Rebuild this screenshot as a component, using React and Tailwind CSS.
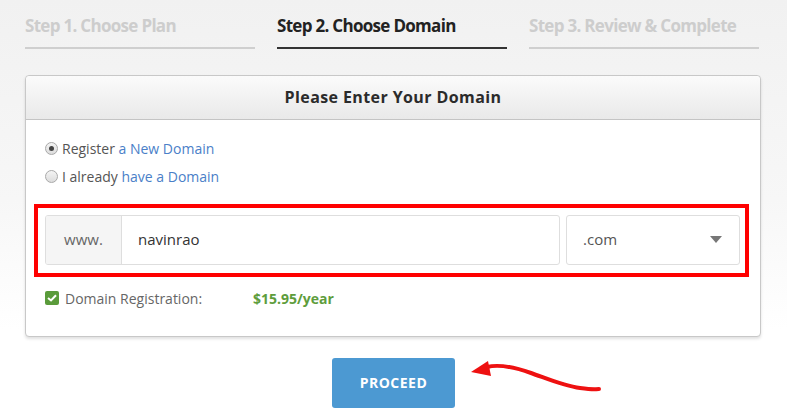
import React from "react";

function Radio({ checked }) {
  return (
    <span className="relative inline-flex h-[13px] w-[13px] shrink-0 items-center justify-center rounded-full border border-[#a9a9a9] bg-[linear-gradient(to_bottom,#f4f4f4,#dcdcdc)]">
      {checked && <span className="h-[5px] w-[5px] rounded-full bg-[#444]" />}
    </span>
  );
}

export default function App() {
  return (
    <div
      className="relative min-h-[417px] w-[787px] bg-[linear-gradient(to_bottom,#f1f1f1,#f7f7f7_200px,#ffffff_330px)] text-[#555]"
      style={{ fontFamily: '"Open Sans", "Liberation Sans", sans-serif' }}
    >
      {/* Steps */}
      <div className="grid grid-cols-3 gap-[22px] pl-[25px] pr-[28px] pt-[13px]">
        <div className="border-b-[2px] border-[#cfcfcf] pb-[8px] text-[17px] font-bold tracking-[-0.7px] text-[#cdcdcd]">
          Step 1. Choose Plan
        </div>
        <div className="border-b-[2px] border-[#333] pb-[8px] text-[17px] font-bold tracking-[-0.7px] text-[#222]">
          Step 2. Choose Domain
        </div>
        <div className="border-b-[2px] border-[#cfcfcf] pb-[8px] text-[17px] font-bold tracking-[-0.7px] text-[#cdcdcd]">
          Step 3. Review &amp; Complete
        </div>
      </div>

      {/* Card */}
      <div className="ml-[25px] mt-[26px] w-[736px] rounded-[4px] border border-[#c8c8c8] bg-white shadow-[0_2px_3px_rgba(0,0,0,0.12)]">
        <div className="flex h-[44px] items-center justify-center rounded-t-[4px] border-b border-[#c4c4c4] bg-[linear-gradient(to_bottom,#fbfbfb,#e9e9e9)] text-[16px] font-bold tracking-[0.4px] text-[#2b2b2b]">
          Please Enter Your Domain
        </div>
        <div className="px-[19px] pt-[19px] pb-[27px]">
          <div className="flex flex-col gap-[9px] text-[14px]">
            <label className="flex h-[19px] items-center gap-[4px]">
              <Radio checked />
              <span>
                Register <span className="text-[#4a80c8]">a New Domain</span>
              </span>
            </label>
            <label className="flex h-[19px] items-center gap-[4px]">
              <Radio />
              <span>
                I already <span className="text-[#4a80c8]">have a Domain</span>
              </span>
            </label>
          </div>

          <div className="-ml-[11px] -mr-[8px] mt-[18px] border-[4px] border-[#ff0000] pt-[7px] pb-[8px] pl-[7px] pr-[5px]">
            <div className="flex h-[50px] gap-[6px]">
              <div className="flex flex-1 overflow-hidden rounded-[3px] border border-[#dedede]">
                <div className="flex w-[76px] items-center justify-center border-r border-[#dedede] bg-[#f5f5f5] text-[15px] text-[#666]">
                  www.
                </div>
                <div className="flex flex-1 items-center pl-[16px] text-[15px] text-[#333]">
                  navinrao
                </div>
              </div>
              <div className="flex w-[174px] items-center justify-between rounded-[3px] border border-[#dedede] pl-[16px] pr-[17px] text-[15px] text-[#555]">
                <span>.com</span>
                <svg width="12" height="7" viewBox="0 0 12 7">
                  <path d="M0 0 L12 0 L6 7 Z" fill="#777" />
                </svg>
              </div>
            </div>
          </div>

          <div className="mt-[11px] flex items-center text-[14px]">
            <span className="flex h-[14px] w-[14px] items-center justify-center rounded-[2px] bg-[#5a9b3a]">
              <svg width="10" height="8" viewBox="0 0 10 8">
                <path d="M1 4 L4 6.5 L9 1.2" fill="none" stroke="#fff" strokeWidth="2" />
              </svg>
            </span>
            <span className="ml-[6px] w-[188px] text-[#666]">Domain Registration:</span>
            <span className="font-bold text-[#5e9d3c]">$15.95/year</span>
          </div>
        </div>
      </div>

      {/* Button */}
      <div className="mt-[21px] flex justify-center">
        <div className="relative">
          <button
            className="flex h-[50px] w-[123px] items-center justify-center rounded-[3px] bg-[#4c99d2] text-[14px] font-bold tracking-[0.5px] text-white"
            style={{ fontFamily: '"Open Sans", "Liberation Sans", sans-serif' }}
          >
            PROCEED
          </button>
          <svg
            className="absolute left-[137px] top-0"
            width="135"
            height="40"
            viewBox="0 0 135 40"
          >
            <path
              d="M18 9 C 30 6, 45 9, 62 15 S 95 28, 111 30 S 125 31, 130 31"
              fill="none"
              stroke="#ee1111"
              strokeWidth="4"
              strokeLinecap="round"
            />
            <path d="M2 14 L19 3 L22 18 Z" fill="#ee1111" />
          </svg>
        </div>
      </div>
    </div>
  );
}
